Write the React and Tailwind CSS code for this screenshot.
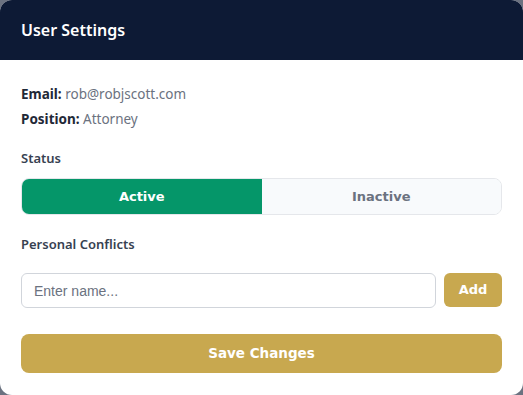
import React, { useState } from 'react';

const App = () => {
    const [status, setStatus] = useState('active');
    const [name, setName] = useState('');

    return (
        <div className="w-[523px] h-[395px] bg-[#6b7280]" style={{ fontFamily: '"Noto Sans", sans-serif' }}>
            <div className="w-full h-full bg-white rounded-xl overflow-hidden flex flex-col">
                <div className="h-[60px] bg-[#0d1a35] flex items-center px-[21px]">
                    <h2 className="text-[16px] font-semibold text-white leading-none">User Settings</h2>
                </div>

                <div className="px-[21px] pt-[23px] flex flex-col">
                    <p className="text-[13.5px] leading-[22px] text-[#6b7280]">
                        <span className="font-bold text-[#1f2937]">Email:</span> rob@robjscott.com
                    </p>
                    <p className="text-[13.5px] leading-[22px] mt-[3px] text-[#6b7280]">
                        <span className="font-bold text-[#1f2937]">Position:</span> Attorney
                    </p>

                    <label className="block text-[13px] leading-[20px] font-semibold text-[#374151] mt-[18px]">Status</label>
                    <div className="mt-[10px] h-[37px] flex rounded-lg border border-[#e5e7eb] overflow-hidden" style={{ fontFamily: '"DejaVu Sans", sans-serif' }}>
                        <button
                            onClick={() => setStatus('active')}
                            className={status === 'active' ? 'flex-1 bg-[#059669] text-white text-[13px] font-bold' : 'flex-1 bg-[#f8fafc] text-[#6b7280] text-[13px] font-bold'}
                        >
                            Active
                        </button>
                        <button
                            onClick={() => setStatus('inactive')}
                            className={status === 'inactive' ? 'flex-1 bg-[#059669] text-white text-[13px] font-bold' : 'flex-1 bg-[#f8fafc] text-[#6b7280] text-[13px] font-bold'}
                        >
                            Inactive
                        </button>
                    </div>

                    <label className="block text-[13px] leading-[20px] font-semibold text-[#374151] mt-[19px]">Personal Conflicts</label>
                    <div className="mt-[19px] flex gap-2">
                        <input
                            type="text"
                            value={name}
                            onChange={(e) => setName(e.target.value)}
                            placeholder="Enter name..."
                            className="flex-1 h-[35px] px-3 text-[14px] border border-[#d1d5db] rounded-md placeholder:text-[#6b7280] outline-none"
                            style={{ fontFamily: '"Liberation Sans", Arial, sans-serif' }}
                        />
                        <button
                            className="w-[58px] h-[34px] bg-[#c8a84f] text-white text-[13px] font-bold rounded-md"
                            style={{ fontFamily: '"DejaVu Sans", sans-serif' }}
                        >
                            Add
                        </button>
                    </div>

                    <button
                        className="mt-[26px] h-[39px] w-full bg-[#c8a84f] text-white text-[13.5px] font-bold rounded-lg"
                        style={{ fontFamily: '"DejaVu Sans", sans-serif' }}
                    >
                        Save Changes
                    </button>
                </div>
            </div>
        </div>
    );
};

export default App;
